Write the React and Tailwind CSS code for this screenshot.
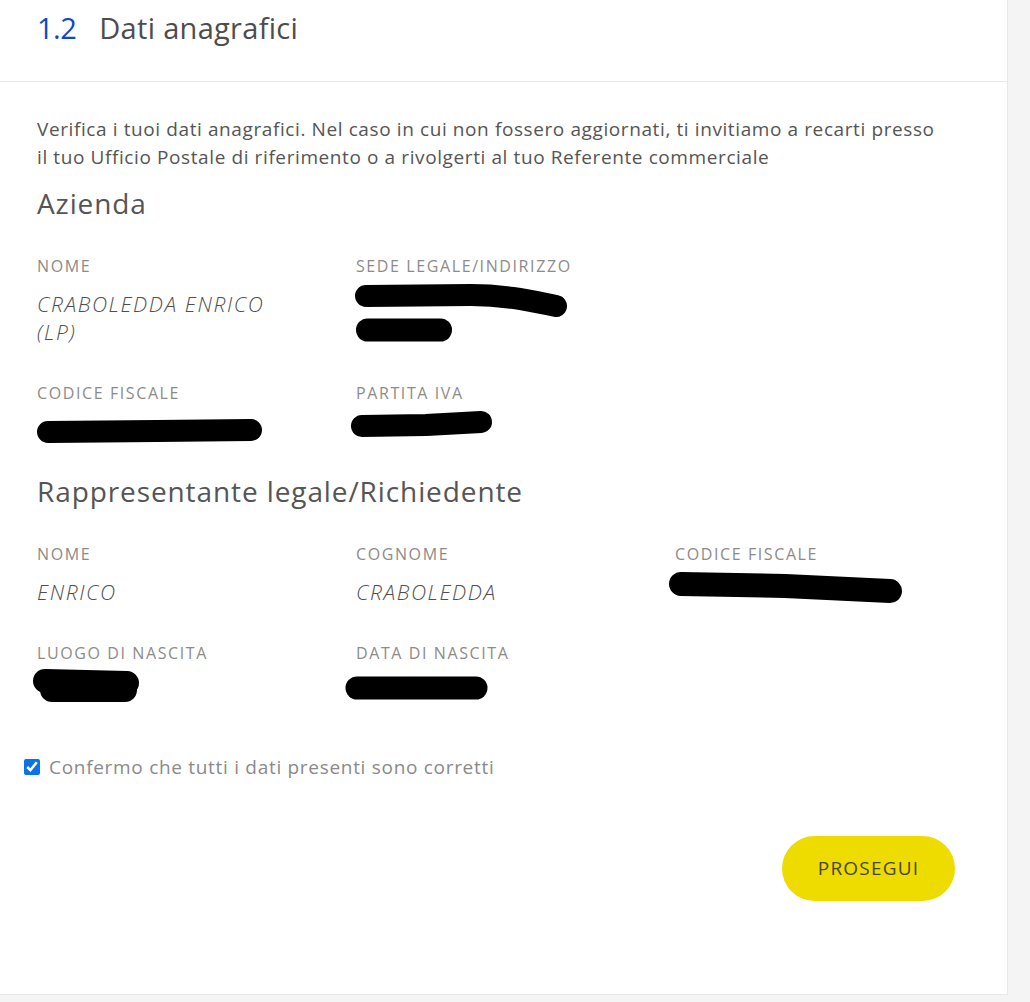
import React from "react";

const body = { fontFamily: '"Open Sans", "Noto Sans", sans-serif' };

function Label({ children }) {
  return (
    <div className="h-[20px] text-[16px] leading-[20px] tracking-[1.6px] uppercase text-[#8d8b88] whitespace-nowrap" style={body}>
      {children}
    </div>
  );
}

function Value({ children }) {
  return (
    <div className="mt-[14px] max-w-[255px] text-[21px] leading-[28px] tracking-[1.6px] italic uppercase font-light text-[#4f4f4f]" style={body}>
      {children}
    </div>
  );
}

function Redact({ paths, w = 240, h = 30 }) {
  return (
    <div className="mt-[13px] h-[28px] relative">
      <svg width={w} height={h} className="overflow-visible absolute left-0 top-0">
        {paths.map((p, i) => (
          <path key={i} d={p.d} stroke="#000" strokeWidth={p.w} strokeLinecap="round" strokeLinejoin="round" fill="none" />
        ))}
      </svg>
    </div>
  );
}

export default function App() {
  return (
    <div className="min-h-[1002px] bg-[#f4f4f4]">
      <div className="w-[1008px] h-[995px] bg-white border-r border-b border-[#e8e8e8]">
        <div className="h-[82px] border-b border-[#e6e6e6] px-[37px] pt-[9px] flex items-start gap-[23px] text-[29px] leading-[38px] tracking-[0.3px]" style={body}>
          <span className="text-[#0a4bc4] tracking-[-0.5px]">1.2</span>
          <span className="text-[#4d4d4d]">Dati anagrafici</span>
        </div>

        <div className="px-[37px] pt-[33px]">
          <p className="text-[19px] leading-[28px] tracking-[0.6px] text-[#555] w-[912px]" style={body}>
            Verifica i tuoi dati anagrafici. Nel caso in cui non fossero aggiornati, ti invitiamo a recarti presso il tuo Ufficio Postale di riferimento o a rivolgerti al tuo Referente commerciale
          </p>

          <h2 className="mt-[14px] text-[28px] leading-[36px] tracking-[0.9px] text-[#555]" style={body}>Azienda</h2>

          <div className="mt-[35px] grid grid-cols-[319px_319px_319px] gap-y-[37px]">
            <div>
              <Label>Nome</Label>
              <Value>CRABOLEDDA ENRICO (LP)</Value>
            </div>
            <div>
              <Label>Sede legale/indirizzo</Label>
              <Redact
                w={220}
                h={60}
                paths={[
                  { d: "M 10 7 L 115 6 C 150 6 175 12 200 17", w: 22 },
                  { d: "M 11.5 41 L 84.5 41", w: 23 },
                ]}
              />
              <div className="h-[28px]" />
            </div>
            <div />
            <div>
              <Label>Codice fiscale</Label>
              <Redact paths={[{ d: "M 11 16 L 120 15 L 214 14", w: 22 }]} />
            </div>
            <div>
              <Label>Partita IVA</Label>
              <Redact paths={[{ d: "M 6 10 L 70 9 L 125 6", w: 22 }]} />
            </div>
            <div />
          </div>

          <h2 className="mt-[29px] text-[28px] leading-[36px] tracking-[0.9px] text-[#555]" style={body}>Rappresentante legale/Richiedente</h2>

          <div className="mt-[35px] grid grid-cols-[319px_319px_319px] gap-y-[37px]">
            <div>
              <Label>Nome</Label>
              <Value>ENRICO</Value>
            </div>
            <div>
              <Label>Cognome</Label>
              <Value>CRABOLEDDA</Value>
            </div>
            <div>
              <Label>Codice fiscale</Label>
              <Redact paths={[{ d: "M 6 7 L 110 9 L 215 14", w: 24 }]} />
            </div>
            <div>
              <Label>Luogo di nascita</Label>
              <Redact
                paths={[
                  { d: "M 8 5 L 90 7", w: 24 },
                  { d: "M 15 14 L 88 14", w: 24 },
                ]}
              />
            </div>
            <div>
              <Label>Data di nascita</Label>
              <Redact paths={[{ d: "M 1 12 L 120 12", w: 23 }]} />
            </div>
            <div />
          </div>

          <label className="mt-[49px] -ml-[13px] h-[28px] flex items-center gap-[9px]" style={body}>
            <input type="checkbox" checked readOnly className="w-[16px] h-[16px] m-0 accent-[#0b72e7]" />
            <span className="text-[19px] leading-[28px] tracking-[0.7px] text-[#8a8a8a]">Confermo che tutti i dati presenti sono corretti</span>
          </label>

          <div className="mt-[55px] flex justify-end pr-[15px]">
            <button className="w-[173px] h-[65px] rounded-full bg-[#eedc00] text-[#4a4634] text-[19px] tracking-[1.2px] uppercase" style={body}>
              Prosegui
            </button>
          </div>
        </div>
      </div>
    </div>
  );
}
